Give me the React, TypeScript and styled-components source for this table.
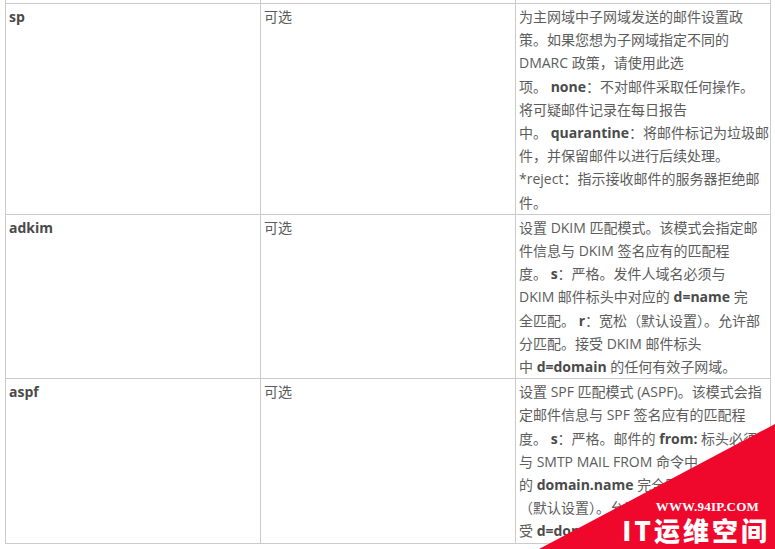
import React from 'react';
import styled, { createGlobalStyle } from 'styled-components';

const GlobalStyle = createGlobalStyle`
  html, body {
    margin: 0;
    padding: 0;
    background: #fff;
  }
`;

const Page = styled.div`
  position: relative;
  width: 775px;
  height: 549px;
  overflow: hidden;
  padding: 0 5px;
  box-sizing: border-box;
  font-family: 'Segoe UI', 'Open Sans', 'Noto Sans CJK SC', sans-serif;
  font-size: 14px;
  color: #5c5c5c;
`;

const Table = styled.table`
  width: 766px;
  table-layout: fixed;
  border-collapse: collapse;
`;

const Cell = styled.td<{ stub?: boolean }>`
  border: 1px solid #cbcbcb;
  border-top: ${({ stub }) => (stub ? 'none' : '1px solid #cbcbcb')};
  height: ${({ stub }) => (stub ? '3px' : 'auto')};
  padding: ${({ stub }) => (stub ? '0' : '1px 3px 0')};
  vertical-align: top;
  line-height: 23.2px;
`;

const Key = styled.strong`
  font-weight: 700;
  color: #4a4a4a;
`;

const Line = styled.span`
  display: block;
  white-space: nowrap;
`;

const B = styled.b`
  font-weight: 700;
  color: #4a4a4a;
`;

const Watermark = styled.div`
  position: absolute;
  right: 0;
  bottom: 0;
  width: 236px;
  height: 125px;
  background: #f0082c;
  clip-path: polygon(0 100%, 100% 0, 100% 100%);
  display: flex;
  flex-direction: column;
  align-items: flex-end;
  justify-content: flex-end;
  padding: 0 8px 4px 0;
  box-sizing: border-box;
  color: #fff;
`;

const Site = styled.div`
  font-family: 'Liberation Serif', 'DejaVu Serif', serif;
  font-weight: 700;
  font-size: 13px;
  line-height: 16px;
  margin-right: 8px;
  letter-spacing: 0.2px;
`;

const Brand = styled.div`
  font-family: 'Noto Sans CJK SC', 'Noto Sans', sans-serif;
  font-weight: 900;
  font-size: 26px;
  line-height: 30px;
  letter-spacing: 3px;
  margin-right: -3px;
`;

type Row = {
  key: string;
  lines: React.ReactNode[];
};

const rows: Row[] = [
  {
    key: 'sp',
    lines: [
      '为主网域中子网域发送的邮件设置政',
      '策。如果您想为子网域指定不同的',
      'DMARC 政策，请使用此选',
      <>项。 <B>none</B>：不对邮件采取任何操作。</>,
      '将可疑邮件记录在每日报告',
      <>中。 <B>quarantine</B>：将邮件标记为垃圾邮</>,
      '件，并保留邮件以进行后续处理。',
      '*reject：指示接收邮件的服务器拒绝邮',
      '件。',
    ],
  },
  {
    key: 'adkim',
    lines: [
      '设置 DKIM 匹配模式。该模式会指定邮',
      '件信息与 DKIM 签名应有的匹配程',
      <>度。 <B>s</B>：严格。发件人域名必须与</>,
      <>DKIM 邮件标头中对应的 <B>d=name</B> 完</>,
      <>全匹配。 <B>r</B>：宽松（默认设置）。允许部</>,
      '分匹配。接受 DKIM 邮件标头',
      <>中 <B>d=domain</B> 的任何有效子网域。</>,
    ],
  },
  {
    key: 'aspf',
    lines: [
      '设置 SPF 匹配模式 (ASPF)。该模式会指',
      '定邮件信息与 SPF 签名应有的匹配程',
      <>度。 <B>s</B>：严格。邮件的 <B>from:</B> 标头必须</>,
      '与 SMTP MAIL FROM 命令中',
      <>的 <B>domain.name</B> 完全匹配。 <B>r</B>：宽松</>,
      '（默认设置）。允许部分匹配。接',
      <>受 <B>d=domain</B> 的任何有效子网域。</>,
    ],
  },
];

export default function App() {
  return (
    <>
      <GlobalStyle />
      <Page>
        <Table>
          <tbody>
            <tr>
              <Cell stub />
              <Cell stub />
              <Cell stub />
            </tr>
            {rows.map((row) => (
              <tr key={row.key}>
                <Cell>
                  <Key>{row.key}</Key>
                </Cell>
                <Cell>可选</Cell>
                <Cell>
                  {row.lines.map((line, i) => (
                    <Line key={i}>{line}</Line>
                  ))}
                </Cell>
              </tr>
            ))}
          </tbody>
        </Table>
        <Watermark>
          <Site>WWW.94IP.COM</Site>
          <Brand>IT运维空间</Brand>
        </Watermark>
      </Page>
    </>
  );
}
